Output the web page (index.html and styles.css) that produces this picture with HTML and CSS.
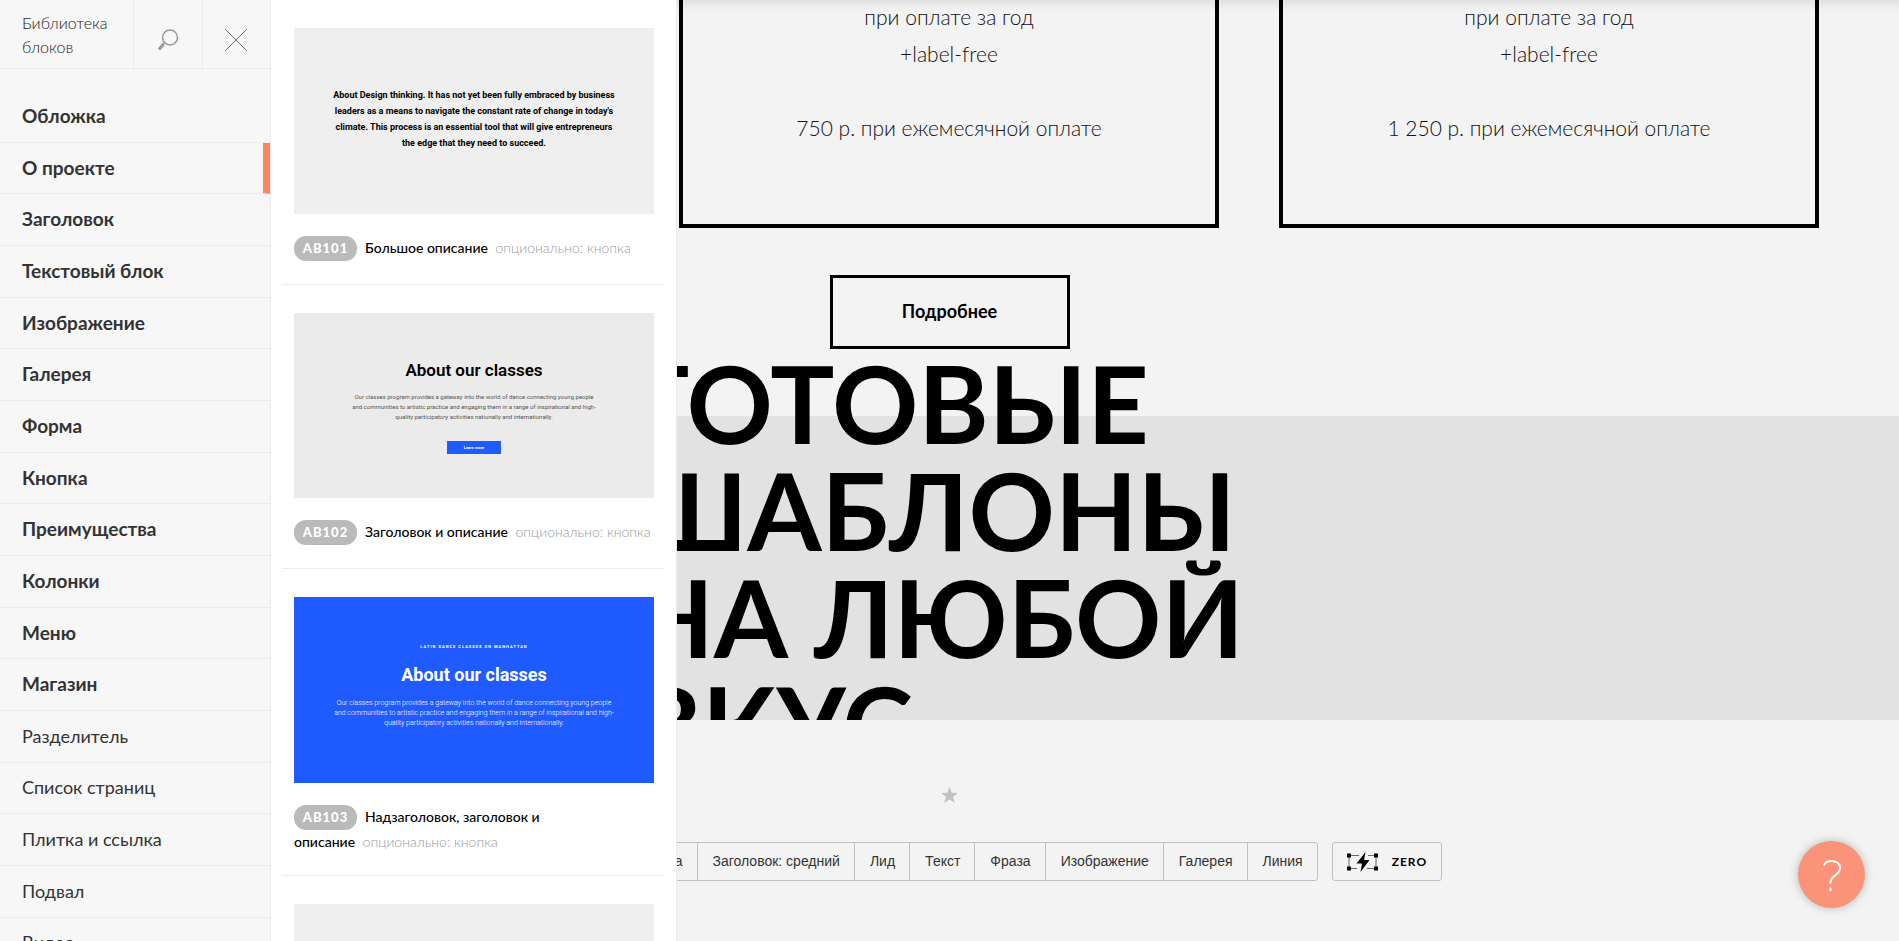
FILE: index.html
```html
<!DOCTYPE html>
<html lang="ru">
<head>
<meta charset="utf-8">
<title>Библиотека блоков</title>
<link rel="stylesheet" href="styles.css">
</head>
<body>
<main class="page">
  <section class="plans">
    <article class="plan plan-empty"></article>
    <article class="plan">
      <p>при оплате за год<br>+label-free</p>
      <p>750 р. при ежемесячной оплате</p>
    </article>
    <article class="plan">
      <p>при оплате за год<br>+label-free</p>
      <p>1 250 р. при ежемесячной оплате</p>
    </article>
  </section>
  <div class="more"><a class="more-link" href="#more">Подробнее</a></div>
  <section class="band">
    <h1 class="band-title">ГОТОВЫЕ<br>ШАБЛОНЫ<br>НА ЛЮБОЙ<br>ВКУС</h1>
  </section>
  <section class="adder">
    <svg class="star" viewBox="0 0 17 16" aria-hidden="true"><path d="M8.500 0l2.100 5.800 6.400.2-5 3.800 1.800 6.200-5.300-3.600L3.200 16 5 9.800 0 6l6.400-.2z"/></svg>
    <div class="toolbar">
      <div class="group">
        <button type="button">Избранные</button><button type="button">Обложка: шапка</button><button type="button">Заголовок: средний</button><button type="button">Лид</button><button type="button">Текст</button><button type="button">Фраза</button><button type="button">Изображение</button><button type="button">Галерея</button><button type="button">Линия</button>
      </div>
      <button type="button" class="zero">
        <svg class="zero-icon" viewBox="0 0 31 20" aria-hidden="true">
          <path class="frame" d="M2 3.500v13M29 3.500v13M2 3.500h10M21 3.500h8M2 16.500h8M20 16.500h9"/>
          <path d="M0 1.500h4v4H0zM27 1.500h4v4h-4zM0 14.500h4v4H0zM27 14.500h4v4h-4zM18.500 0L9.500 11.500h5.500L13.500 20l9-12h-5.500z"/>
        </svg>
        ZERO
      </button>
    </div>
  </section>
</main>

<aside class="library">
  <nav class="cats">
    <header class="cats-head">
      <h2 class="cats-title">Библиотека блоков</h2>
      <button type="button" class="icon-btn search" aria-label="Поиск">
        <svg viewBox="0 0 24 24" aria-hidden="true"><circle cx="14" cy="9.500" r="7.500"/><path d="M8.700 14.800L6.500 17"/><path class="grip" d="M7.500 16L3 21.500"/></svg>
      </button>
      <button type="button" class="icon-btn close" aria-label="Закрыть">
        <svg viewBox="0 0 24 24" aria-hidden="true"><path d="M1 1l22 22M23 1L1 23"/></svg>
      </button>
    </header>
    <ul class="cats-list">
      <li><a href="#cover">Обложка</a></li>
      <li class="active"><a href="#about">О проекте</a></li>
      <li><a href="#title">Заголовок</a></li>
      <li><a href="#text">Текстовый блок</a></li>
      <li><a href="#image">Изображение</a></li>
      <li><a href="#gallery">Галерея</a></li>
      <li><a href="#form">Форма</a></li>
      <li><a href="#button">Кнопка</a></li>
      <li><a href="#features">Преимущества</a></li>
      <li><a href="#columns">Колонки</a></li>
      <li><a href="#menu">Меню</a></li>
      <li><a href="#shop">Магазин</a></li>
      <li class="light"><a href="#divider">Разделитель</a></li>
      <li class="light"><a href="#pages">Список страниц</a></li>
      <li class="light"><a href="#tile">Плитка и ссылка</a></li>
      <li class="light"><a href="#footer">Подвал</a></li>
      <li class="light"><a href="#video">Видео</a></li>
    </ul>
  </nav>
  <div class="blocks">
    <article class="block">
      <div class="thumb thumb-quote">
        <p>About Design thinking. It has not yet been fully embraced by business<br>leaders as a means to navigate the constant rate of change in today's<br>climate. This process is an essential tool that will give entrepreneurs<br>the edge that they need to succeed.</p>
      </div>
      <p class="caption"><span class="code">AB101</span><span class="name">Большое описание</span> <span class="opt">опционально: кнопка</span></p>
    </article>
    <article class="block">
      <div class="thumb thumb-classes">
        <h3>About our classes</h3>
        <p>Our classes program provides a gateway into the world of dance connecting young people<br>and communities to artistic practice and engaging them in a range of inspirational and high-<br>quality participatory activities nationally and internationally.</p>
        <span class="mini-btn">Learn more</span>
      </div>
      <p class="caption"><span class="code">AB102</span><span class="name">Заголовок и описание</span> <span class="opt">опционально: кнопка</span></p>
    </article>
    <article class="block">
      <div class="thumb thumb-blue">
        <span class="over">LATIN DANCE CLASSES ON MANHATTAN</span>
        <h3>About our classes</h3>
        <p>Our classes program provides a gateway into the world of dance connecting young people<br>and communities to artistic practice and engaging them in a range of inspirational and high-<br>quality participatory activities nationally and internationally.</p>
      </div>
      <p class="caption"><span class="code">AB103</span><span class="name">Надзаголовок, заголовок и<br>описание</span> <span class="opt">опционально: кнопка</span></p>
    </article>
    <article class="block">
      <div class="thumb thumb-quote"></div>
    </article>
  </div>
</aside>

<button type="button" class="help" aria-label="Помощь">
  <svg viewBox="0 0 20 32" aria-hidden="true"><path d="M2 6.500C3 3 6 2 9.500 2 14.500 2 18 4.500 18 9c0 3.500-2 5.500-5 7.500-3 2-4.500 3.500-4.500 8M8.500 28.500v3.500"/></svg>
</button>
</body>
</html>
```
FILE: styles.css
```css
* { box-sizing: border-box; }
body {
  margin: 0;
  height: 100vh;
  overflow: hidden;
  background: #f3f3f3;
  color: #000;
  font-family: Lato, "Open Sans", sans-serif;
}
h1, h2, h3, p, ul { margin: 0; padding: 0; font-weight: inherit; }
ul { list-style: none; }
a { color: inherit; text-decoration: none; }
button { font: inherit; color: inherit; background: none; border: 0; padding: 0; margin: 0; cursor: pointer; }
svg { display: block; }

/* page under the library */
.page { height: 100%; overflow: hidden; box-shadow: inset 0 12px 12px -10px rgba(0, 0, 0, .12); }
.plans {
  display: grid;
  grid-template-columns: repeat(3, 1fr);
  gap: 60px;
  padding: 0 80px 0 79px;
}
.plan {
  display: flex;
  flex-direction: column;
  justify-content: flex-end;
  gap: 37px;
  height: 228px;
  padding-bottom: 78px;
  border: 4px solid #000;
  border-top: 0;
  text-align: center;
  font-size: 21px;
  font-weight: 300;
  line-height: 37px;
  color: #111;
}
.plan-empty { visibility: hidden; }
.more { display: flex; justify-content: center; padding: 47px 0 67px; }
.more-link {
  display: flex;
  align-items: center;
  justify-content: center;
  width: 240px;
  height: 74px;
  padding-bottom: 3px;
  border: 3px solid #000;
  font-size: 18px;
  font-weight: 700;
}
.band {
  height: 304px;
  background: #e2e2e2;
  clip-path: inset(-100px 0 0 0);
}
.band-title {
  width: 636px;
  margin: 0 auto;
  padding: 0;
  position: relative;
  top: -67px;
  font-size: 107px;
  line-height: 107px;
  font-weight: 700;
}
.adder { display: flex; flex-direction: column; align-items: center; gap: 39px; padding-top: 67px; }
.star { width: 17px; height: 16px; fill: #c1c1c1; }
.toolbar {
  display: flex;
  gap: 14px;
  font-family: "Liberation Sans", Arial, sans-serif;
  font-size: 14px;
  color: #333;
}
.group { display: flex; border: 1px solid #c1c1c1; border-radius: 3px; }
.group button { height: 37px; padding: 0 14px 2px 15px; white-space: nowrap; }
.group button + button { border-left: 1px solid #c1c1c1; }
.zero {
  display: flex;
  align-items: center;
  gap: 14px;
  padding: 0 14px;
  border: 1px solid #c1c1c1;
  border-radius: 3px;
  font-family: Lato, sans-serif;
  font-size: 12px;
  font-weight: 700;
  letter-spacing: 1px;
  color: #000;
}
.zero-icon { width: 31px; height: 20px; }
.zero-icon .frame { fill: none; stroke: #666; stroke-width: 1; }

/* block library */
.library {
  position: absolute;
  top: 0;
  left: 0;
  bottom: 0;
  display: flex;
  overflow: hidden;
  background: #fff;
  border-right: 1px solid #ebebeb;
}
.cats { width: 271px; background: #f7f7f7; border-right: 1px solid #ebebeb; }
.cats-head { display: flex; height: 69px; border-bottom: 1px solid #ebebeb; }
.cats-title {
  flex: 1;
  padding: 11px 22px;
  font-size: 16px;
  line-height: 24px;
  font-weight: 300;
  color: #222;
}
.icon-btn {
  display: flex;
  align-items: center;
  justify-content: center;
  width: 69px;
  padding-top: 11px;
  border-left: 1px solid #ebebeb;
}
.icon-btn svg { width: 24px; height: 24px; fill: none; stroke: #999; stroke-width: 1.500; }
.icon-btn.close { width: 68px; padding-right: 2px; }
.icon-btn .grip { stroke-width: 3; }
.icon-btn.close svg { stroke: #777; stroke-width: 1; }
.cats-list { padding-top: 22px; }
.cats-list li {
  display: flex;
  align-items: center;
  height: 52px;
  padding-bottom: 2px;
  border-bottom: 1px solid #ebebeb;
  font-size: 19px;
  font-weight: 700;
  color: #333;
}
.cats-list li:nth-child(3n+2) { height: 51px; }
.cats-list li.light { font-size: 18px; font-weight: 400; }
.cats-list li.active { border-right: 7px solid #ff855d; }
.cats-list a { flex: 1; padding-left: 22px; }

.blocks { width: 405px; }
.block { margin: 0 11px; padding: 28px 11px 0 12px; border-bottom: 1px solid #ebebeb; }
.thumb {
  display: flex;
  flex-direction: column;
  align-items: center;
  height: 186px;
  text-align: center;
  white-space: nowrap;
  font-family: Roboto, sans-serif;
}
.thumb-quote { justify-content: center; padding-bottom: 5px; background: #efefef; font-size: 9px; line-height: 16px; font-weight: 700; }
.thumb-classes { height: 185px; padding-top: 45px; background: #ebebeb; }
.thumb-classes h3 { font-size: 17px; line-height: 24px; font-weight: 600; }
.thumb-classes p { margin-top: 10px; font-size: 6px; line-height: 10px; font-weight: 400; color: #555; }
.mini-btn { width: 54px; margin-top: 19px; background: #1f5bff; color: #fff; font-size: 4px; line-height: 13px; font-weight: 700; }
.thumb-blue { padding-top: 46px; background: #1f5bff; color: #fff; }
.thumb-blue .over { font-size: 4px; line-height: 8px; font-weight: 700; letter-spacing: 1px; }
.thumb-blue h3 { margin-top: 12px; font-size: 18px; line-height: 24px; font-weight: 700; }
.thumb-blue p { margin-top: 11px; font-size: 7px; line-height: 10px; font-weight: 300; }
.caption { min-height: 70px; padding: 22px 0 21px; font-size: 14px; line-height: 24px; font-weight: 500; white-space: nowrap; }
.code {
  display: inline-block;
  width: 63px;
  height: 25px;
  margin-right: 8px;
  border-radius: 12px;
  background: #bababa;
  color: #fff;
  font-size: 13px;
  line-height: 25px;
  font-weight: 900;
  letter-spacing: 1px;
  text-align: center;
}
.opt { margin-left: 4px; color: #999; font-weight: 300; }

.help {
  position: absolute;
  right: 34px;
  bottom: 33px;
  display: flex;
  align-items: center;
  justify-content: center;
  width: 67px;
  height: 67px;
  border-radius: 50%;
  background: #fa9378;
  box-shadow: 0 0 10px rgba(0, 0, 0, .25);
}
.help svg { width: 20px; height: 32px; fill: none; stroke: #fff; stroke-width: 2; }
```
